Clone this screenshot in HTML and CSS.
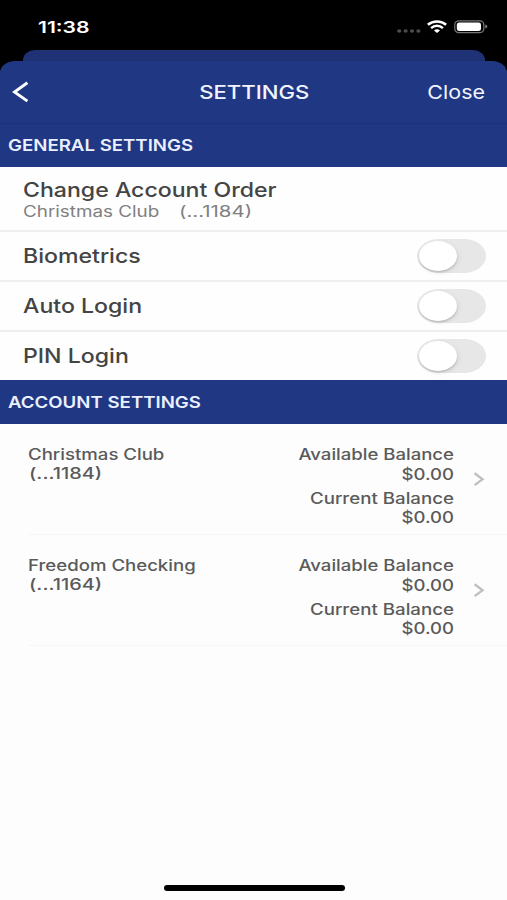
FILE: index.html
```html
<!DOCTYPE html>
<html lang="en">
<head>
<meta charset="utf-8">
<title>Settings</title>
<link rel="stylesheet" href="styles.css">
</head>
<body>
<div class="screen">
  <div class="statusbar">
    <span class="wide time">11:38</span>
    <div class="status-icons">
      <svg class="dots" width="24" height="4" viewBox="0 0 24 4"><g fill="#4c4c4c"><ellipse cx="2.2" cy="2" rx="2.1" ry="1.8"/><ellipse cx="8.6" cy="2" rx="2.1" ry="1.8"/><ellipse cx="15" cy="2" rx="2.1" ry="1.8"/><ellipse cx="21.4" cy="2" rx="2.1" ry="1.8"/></g></svg>
      <svg class="wifi" width="20" height="13" viewBox="0 0 20 13"><g fill="none" stroke="#fff" stroke-width="2.5"><path d="M.9 4.7C5.9.3 14.1.3 19.1 4.7"/><path d="M4.1 8.1C7.4 5.1 12.6 5.1 15.9 8.1"/></g><path fill="#fff" d="M7 10.4c1.7-1.4 4.3-1.4 6 0L10 12.9z"/></svg>
      <svg class="battery" width="34" height="14" viewBox="0 0 34 14"><rect x=".8" y=".8" width="29" height="11.8" rx="4" ry="3.6" fill="none" stroke="#767676" stroke-width="1.2"/><rect x="2.8" y="2.4" width="24.2" height="8.7" rx="2.4" fill="#fff"/><path d="M31.2 4.6q2.2.6 2.2 2t-2.2 2z" fill="#767676"/></svg>
    </div>
  </div>
  <div class="sheet-behind"></div>
  <main class="sheet">
    <header class="navbar">
      <svg class="back" width="18" height="24" viewBox="0 0 18 24"><path d="M15.4 2.7 2.4 12l13 9.1" fill="none" stroke="#fff" stroke-width="2.9"/></svg>
      <h1 class="wide title">SETTINGS</h1>
      <span class="wide close">Close</span>
    </header>
    <h2 class="section general"><span class="wide">GENERAL SETTINGS</span></h2>
    <div class="row order">
      <span class="wide label">Change Account Order</span>
      <div class="sub"><span class="wide sub-name">Christmas Club</span><span class="wide sub-num">(...1184)</span></div>
    </div>
    <div class="row option"><span class="wide label">Biometrics</span><span class="toggle"><i></i></span></div>
    <div class="row option"><span class="wide label">Auto Login</span><span class="toggle"><i></i></span></div>
    <div class="row option last"><span class="wide label">PIN Login</span><span class="toggle"><i></i></span></div>
    <h2 class="section"><span class="wide">ACCOUNT SETTINGS</span></h2>
    <div class="account">
      <div class="name"><span class="wide">Christmas Club</span><span class="wide num">(...1184)</span></div>
      <div class="balances"><span class="wide available">Available Balance</span><span class="wide amount">$0.00</span><span class="wide current">Current Balance</span><span class="wide amount">$0.00</span></div>
      <svg class="chevron" width="12" height="15" viewBox="0 0 12 15"><path d="M1.6 1.3 9.6 7.2 1.6 13.1" fill="none" stroke="#bfbfbf" stroke-width="2.3"/></svg>
    </div>
    <div class="account">
      <div class="name"><span class="wide">Freedom Checking</span><span class="wide num">(...1164)</span></div>
      <div class="balances"><span class="wide available">Available Balance</span><span class="wide amount">$0.00</span><span class="wide current">Current Balance</span><span class="wide amount">$0.00</span></div>
      <svg class="chevron" width="12" height="15" viewBox="0 0 12 15"><path d="M1.6 1.3 9.6 7.2 1.6 13.1" fill="none" stroke="#bfbfbf" stroke-width="2.3"/></svg>
    </div>
    <div class="home"></div>
  </main>
</div>
</body>
</html>
```
FILE: styles.css
```css
* { box-sizing: border-box; }
body { margin: 0; background: #000; font-family: Inter, "Liberation Sans", sans-serif; }
h1, h2 { margin: 0; font-size: inherit; }

.screen { width: 507px; height: 900px; display: flex; flex-direction: column; overflow: hidden; }

/* Stretched lettering: each text sets its own horizontal factor */
.wide { display: block; white-space: nowrap; transform: scaleX(var(--sx, 1.165)); transform-origin: left center; }

.statusbar { height: 50px; display: flex; justify-content: space-between; padding: 0 19px 0 37.5px; color: #fff; }
.time { --sx: 1.32; font-size: 16px; font-weight: 600; line-height: 20px; margin-top: 17px; }
.status-icons { display: flex; align-items: flex-start; padding-top: 20px; }
.dots { margin: 8.5px 6px 0 0; }
.wifi { margin-right: 7px; }

.sheet-behind { height: 11px; margin: 0 22px 0 23px; background: #1e3275; border-radius: 12px 12px 0 0 / 10px 10px 0 0; }

.sheet { flex: 1; display: flex; flex-direction: column; background: linear-gradient(#203784 70px, #fdfdfd 70px); border-radius: 15px 15px 0 0 / 12px 12px 0 0; }

.navbar { height: 63px; display: grid; grid-template-columns: 1fr auto 1fr; align-items: center; border-bottom: 1px solid #1e3278; color: #f2f5ff; padding: 0 22px 0 12px; }
.title { grid-column: 2; margin: 1px 0 0 11px; font-size: 19px; font-weight: 500; line-height: 24px; transform-origin: center; }
.close { --sx: 1.13; justify-self: end; margin-top: 1px; font-size: 19px; line-height: 24px; transform-origin: right center; }
.back { grid-row: 1; }

.section { height: 44px; display: flex; align-items: center; padding-left: 8px; background: #203784; color: #eaf0ff; font-size: 16px; font-weight: 600; }
.general { height: 43px; padding-bottom: 1px; }

.row { background: #fefefe; border-bottom: 2px solid #efefef; padding: 0 21.5px 0 22.5px; }
.label { --sx: 1.155; color: #444; font-size: 20px; font-weight: 500; line-height: 24px; }
.order { height: 65px; padding-top: 11px; }
.sub { display: flex; color: #808080; font-size: 15.5px; line-height: 20px; }
.sub-name { --sx: 1.215; width: 156.5px; }
.sub-num { --sx: 1.315; }
.option { height: 50px; display: flex; align-items: center; justify-content: space-between; }
.option.last { height: 48px; border-bottom: 0; }

.toggle { width: 68.5px; height: 34px; margin-top: -1px; padding: 2px; background: #e7e7e7; border-radius: 22px / 17px; }
.toggle i { display: block; width: 37.5px; height: 30px; background: #fff; border-radius: 50%; box-shadow: 0 1.5px 2px rgba(0, 0, 0, .16), 2px 2px 5px rgba(0, 0, 0, .06); }

.account { height: 111px; display: flex; margin-left: 28px; padding-right: 22px; border-bottom: 1px solid #f6f6f6; color: #5a5a5a; font-size: 15.5px; font-weight: 500; line-height: 20px; }
.name { flex: 1; padding-top: 20.5px; --sx: 1.2; }
.name .wide { line-height: 19px; }
.name .num { --sx: 1.285; margin-left: 1px; }
.balances { padding-top: 20.5px; text-align: right; }
.balances .wide { transform-origin: right center; }
.available { --sx: 1.197; }
.current { --sx: 1.205; margin-top: 5px; }
.amount { --sx: 1.195; line-height: 19px; }
.current + .amount { margin-top: -1px; }
.chevron { margin: 48px 0 0 19.5px; }

.home { width: 181px; height: 6px; margin: auto 0 9px 163.5px; border-radius: 3px; background: #000; flex: none; }
```
